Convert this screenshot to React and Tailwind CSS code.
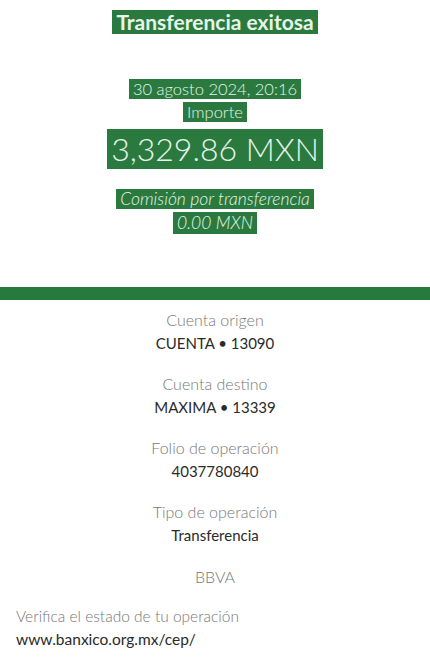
export default function App() {
  const rows = [
    ["Cuenta origen", "CUENTA • 13090"],
    ["Cuenta destino", "MAXIMA • 13339"],
    ["Folio de operación", "4037780840"],
    ["Tipo de operación", "Transferencia"],
  ];

  return (
    <div className="min-h-[661px] w-[430px] bg-white font-['Lato','Open_Sans',sans-serif]">
      <div className="flex flex-col items-center pt-[10px] text-[#e6f4ea]">
        <h1 className="bg-[#2a7a3f] px-[4px] text-[21px] font-bold leading-[24px]">Transferencia exitosa</h1>

        <p className="mt-[45px] bg-[#2a7a3f] px-[4px] text-[16.5px] font-light leading-[20px]">30 agosto 2024, 20:16</p>
        <p className="mt-[3px] bg-[#2a7a3f] px-[4px] text-[16.5px] font-light leading-[20px]">Importe</p>
        <p className="mt-[7px] bg-[#2a7a3f] px-[4px] text-[32px] font-light leading-[40px]">3,329.86 MXN</p>

        <p className="mt-[20px] bg-[#2a7a3f] px-[4px] text-[17.5px] font-light italic leading-[20px]">Comisión por transferencia</p>
        <p className="mt-[3px] bg-[#2a7a3f] px-[4px] text-[17.5px] font-light italic leading-[22px]">0.00 MXN</p>
      </div>

      <div className="mt-[53px] h-[13px] bg-[#277a3e]" />

      <div className="flex flex-col items-center pt-[10px]">
        {rows.map(([label, value]) => (
          <div key={label} className="mb-[21px] flex flex-col items-center gap-[3px]">
            <span className="text-[16px] font-light leading-[20px] text-[#777]">{label}</span>
            <span className="text-[15px] leading-[20px] text-[#2a2a2a]">{value}</span>
          </div>
        ))}
        <span className="mt-[1px] text-[16px] font-light leading-[20px] text-[#777]">BBVA</span>
      </div>

      <div className="flex flex-col gap-[3px] px-4 pt-[19px]">
        <span className="text-[15.5px] font-light leading-[20px] text-[#777]">Verifica el estado de tu operación</span>
        <span className="text-[15.5px] leading-[20px] text-[#2a2a2a]">www.banxico.org.mx/cep/</span>
      </div>
    </div>
  );
}
